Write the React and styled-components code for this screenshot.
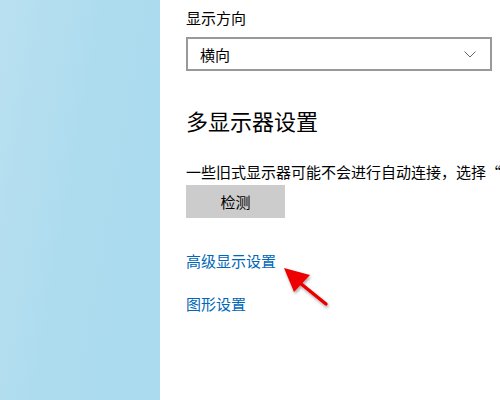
import { createGlobalStyle, styled } from "styled-components";

const GlobalStyle = createGlobalStyle`
  html, body {
    margin: 0;
    padding: 0;
    background: #ffffff;
  }
  body {
    font-family: "Noto Sans CJK SC", "Noto Sans", sans-serif;
  }
`;

function App() {
  return (
    <>
      <GlobalStyle />
      <StPage>
        <StSidebar />
        <StContent>
          <StLabel>显示方向</StLabel>
          <StSelect>
            <span>横向</span>
            <svg width="12" height="7" viewBox="0 0 12 7">
              <path d="M0.5 0.5 L6 6 L11.5 0.5" fill="none" stroke="#666" strokeWidth="1" />
            </svg>
          </StSelect>

          <StHeading>多显示器设置</StHeading>
          <StText>一些旧式显示器可能不会进行自动连接，选择“检测”尝试连接。</StText>
          <StButton>检测</StButton>

          <StLinks>
            <StLinkWrap>
              <StLink>高级显示设置</StLink>
              <StArrow width="60" height="50" viewBox="0 0 60 50">
                <defs>
                  <filter id="sh" x="-30%" y="-30%" width="160%" height="160%">
                    <feDropShadow dx="1" dy="2" stdDeviation="1.5" floodColor="#000" floodOpacity="0.35" />
                  </filter>
                </defs>
                <g filter="url(#sh)">
                  <path d="M44 40 L18 19" stroke="#e80000" strokeWidth="3.4" strokeLinecap="round" />
                  <path d="M2 4 L28 11 L12 28 Z" fill="#ee0000" />
                </g>
              </StArrow>
            </StLinkWrap>
            <StLink>图形设置</StLink>
          </StLinks>
        </StContent>
      </StPage>
    </>
  );
}

export default App;

// styled-components
const StPage = styled.div`
  display: flex;
  width: 500px;
  height: 400px;
  overflow: hidden;
`;

const StSidebar = styled.div`
  width: 160px;
  flex-shrink: 0;
  background: linear-gradient(100deg, #b9e0f0 0%, #aedcef 45%, #aadbef 100%);
`;

const StContent = styled.div`
  flex: 1;
  min-width: 0;
  padding: 7px 0 0 26px;
  display: flex;
  flex-direction: column;
  align-items: flex-start;
  overflow: hidden;
`;

const StLabel = styled.div`
  font-size: 15px;
  line-height: 22px;
  color: #000;
`;

const StSelect = styled.div`
  box-sizing: border-box;
  margin-top: 8px;
  width: 306px;
  height: 34px;
  border: 2px solid #999999;
  display: flex;
  align-items: center;
  justify-content: space-between;
  padding: 0 14px 0 12px;
  font-size: 15px;
  color: #000;

  svg {
    margin-top: 1px;
  }
`;

const StHeading = styled.div`
  margin-top: 34px;
  font-size: 22px;
  line-height: 30px;
  color: #000;
`;

const StText = styled.div`
  margin-top: 26px;
  font-size: 15px;
  line-height: 22px;
  color: #000;
  white-space: nowrap;
`;

const StButton = styled.div`
  margin-top: 2px;
  width: 99px;
  height: 33px;
  background: #cccccc;
  display: flex;
  align-items: center;
  justify-content: center;
  font-size: 15px;
  color: #000;
`;

const StLinks = styled.div`
  margin-top: 32px;
  display: flex;
  flex-direction: column;
  gap: 21px;
`;

const StLinkWrap = styled.div`
  position: relative;
`;

const StLink = styled.div`
  font-size: 15px;
  line-height: 22px;
  color: #0067b8;
`;

const StArrow = styled.svg`
  position: absolute;
  left: 96px;
  top: 14px;
  overflow: visible;
`;
